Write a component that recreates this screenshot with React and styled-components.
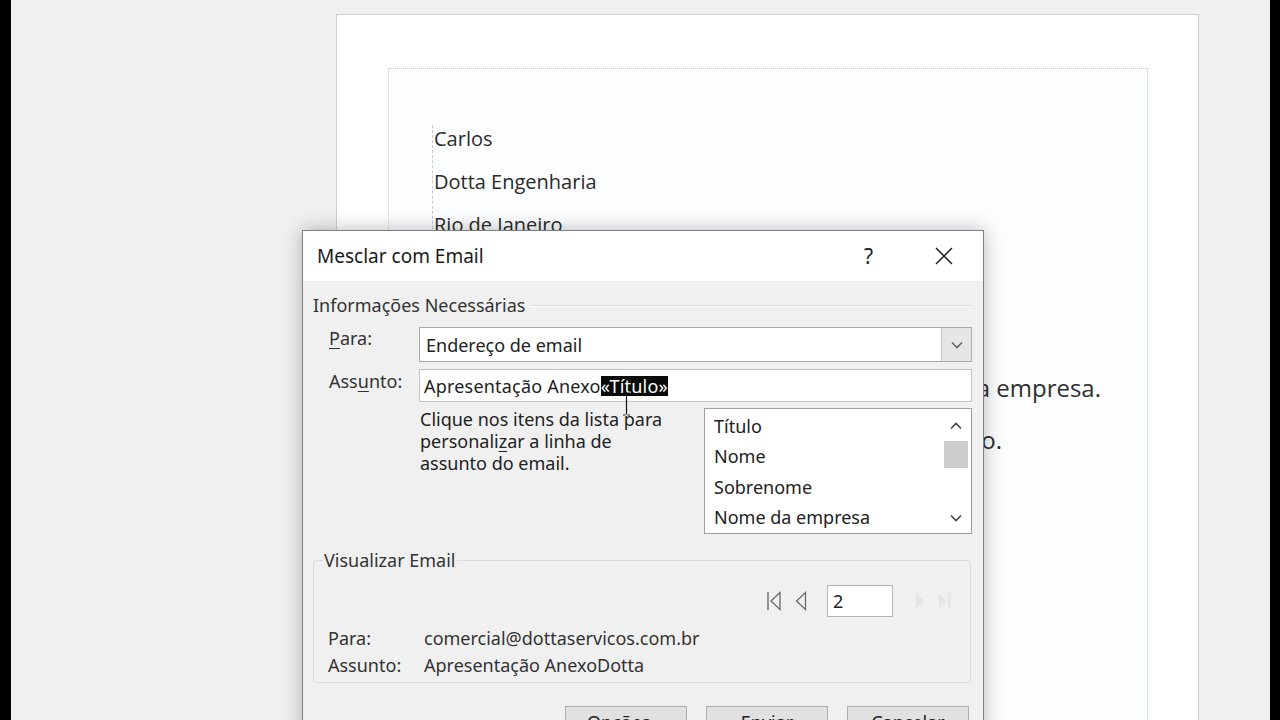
import React from "react";
import styled, { createGlobalStyle } from "styled-components";

const Global = createGlobalStyle`
  html, body { margin: 0; padding: 0; background: #000; }
  body { font-family: "Noto Sans", "Open Sans", sans-serif; }
  * { box-sizing: border-box; }
`;

const Screen = styled.div`
  width: 1280px;
  height: 720px;
  display: flex;
  overflow: hidden;
  background: #000;
`;

const Edge = styled.div`
  width: ${(p) => p.$w}px;
  flex: none;
  background: #000;
`;

const Workspace = styled.div`
  position: relative;
  flex: 1;
  background: #f0f0f0;
  padding: 14px 0 0 325px;
  overflow: hidden;
`;

const Page = styled.div`
  width: 863px;
  height: 900px;
  background: #fff;
  border: 1px solid #cfcfcf;
  padding: 53px 0 0 51px;
`;

const TextArea = styled.div`
  width: 760px;
  height: 800px;
  border-top: 1px dotted #b9c6d3;
  border-left: 1px dotted #c9d4df;
  border-right: 1px dotted #b9d0e6;
  background: #fcfdfe;
  padding: 56px 0 0 43px;
`;

const AddressBlock = styled.div`
  border-left: 1px dashed #c8c8c8;
  padding-left: 1px;
  width: 300px;
`;

const DocLine = styled.p`
  margin: 0 0 15px 0;
  font-family: "Open Sans", "Noto Sans", sans-serif;
  font-size: 20px;
  line-height: 28px;
  color: #2b2b2b;
`;

const DocParagraph = styled.p`
  margin: 0;
  height: ${(p) => p.$h}px;
  padding-right: ${(p) => p.$endGap}px;
  text-align: right;
  font-family: "Open Sans", "Noto Sans", sans-serif;
  font-size: 24px;
  line-height: 32px;
  color: #2f2f2f;
`;

const Spacer = styled.div`
  height: ${(p) => p.$h}px;
`;

/* ---------- dialog ---------- */

const Dialog = styled.div`
  position: absolute;
  left: 291px;
  top: 230px;
  width: 682px;
  height: 520px;
  background: #f0f0f0;
  border: 1px solid #7f7f7f;
  box-shadow: 0 0 18px rgba(0, 0, 0, 0.28);
  display: flex;
  flex-direction: column;
  color: #1e1e1e;
  font-size: 18px;
`;

const TitleBar = styled.div`
  height: 50px;
  background: #fff;
  display: flex;
  align-items: center;
  padding: 0 30px 0 14px;
`;

const Title = styled.div`
  flex: 1;
  font-size: 19px;
  color: #1a1a1a;
`;

const HelpGlyph = styled.span`
  font-size: 21px;
  color: #222;
  margin-right: 62px;
`;

const Body = styled.div`
  padding: 13px 11px 0 10px;
  display: flex;
  flex-direction: column;
`;

const SectionHead = styled.div`
  display: flex;
  align-items: center;
  gap: 6px;
  color: #333;
  line-height: 22px;
`;

const Rule = styled.div`
  flex: 1;
  height: 2px;
  border-top: 1px solid #dcdcdc;
  border-bottom: 1px solid #fbfbfb;
  margin-top: 2px;
`;

const FieldRow = styled.div`
  display: grid;
  grid-template-columns: 106px 1fr;
  margin-top: ${(p) => p.$mt}px;
`;

const FieldLabel = styled.label`
  padding: ${(p) => p.$pt}px 0 0 16px;
  color: #333;
  line-height: 20px;
`;

const Key = styled.span`
  text-decoration: underline;
  text-underline-offset: 3px;
`;

const Combo = styled.div`
  height: 35px;
  display: flex;
  background: #fff;
  border: 1px solid #a9a9a9;
`;

const ComboText = styled.div`
  flex: 1;
  padding: 0 6px;
  display: flex;
  align-items: center;
  color: #222;
`;

const ComboButton = styled.div`
  width: 30px;
  background: #e6e6e6;
  border-left: 1px solid #c2c2c2;
  display: flex;
  align-items: center;
  justify-content: center;
`;

const TextBox = styled.div`
  position: relative;
  height: 33px;
  background: #fff;
  border: 1px solid #c4c4c4;
  display: flex;
  align-items: center;
  padding: 0 4px;
  color: #222;
  white-space: pre;
  letter-spacing: 0.2px;
`;

const Selected = styled.span`
  background: #0a0a0a;
  color: #fff;
  line-height: 20px;
`;

const IBeam = styled.svg`
  position: absolute;
  left: 202px;
  top: 22px;
`;

const HelpRow = styled.div`
  display: grid;
  grid-template-columns: 285px 1fr;
`;

const HelpText = styled.p`
  margin: 0;
  padding: 0 0 0 1px;
  line-height: 22px;
  color: #222;
`;

const ListBox = styled.div`
  height: 126px;
  background: #fff;
  border: 1px solid #9f9f9f;
  display: flex;
`;

const ListItems = styled.ul`
  flex: 1;
  margin: 0;
  padding: 2px 0 0 9px;
  list-style: none;
`;

const ListItem = styled.li`
  height: 30.3px;
  line-height: 30px;
  color: #222;
`;

const ScrollTrack = styled.div`
  width: 30px;
  display: flex;
  flex-direction: column;
  align-items: center;
  padding: 6px 0 4px;
`;

const ScrollArrow = styled.div`
  height: 22px;
  display: flex;
  align-items: center;
  justify-content: center;
`;

const ScrollThumb = styled.div`
  width: 24px;
  height: 27px;
  margin-top: 4px;
  background: #cdcdcd;
`;

const ScrollFill = styled.div`
  flex: 1;
`;

const GroupBox = styled.fieldset`
  margin: 15px 1px 0 0;
  padding: 6px 18px 8px 14px;
  border: 1px solid #dcdcdc;
  border-radius: 3px;
  height: 134px;
  min-width: 0;
`;

const Legend = styled.legend`
  padding: 0 2px;
  margin-left: -6px;
  color: #333;
  line-height: 22px;
`;

const NavRow = styled.div`
  display: flex;
  justify-content: flex-end;
  align-items: center;
  margin-top: 8px;
`;

const NavButton = styled.div`
  width: ${(p) => p.$w}px;
  margin-left: ${(p) => p.$ml || 0}px;
  height: 32px;
  display: flex;
  align-items: center;
  justify-content: center;
`;

const RecordBox = styled.div`
  width: 66px;
  height: 32px;
  margin: 0 21px 0 20px;
  background: #fff;
  border: 1px solid #b4b4b4;
  display: flex;
  align-items: center;
  padding-left: 5px;
  color: #222;
`;

const PreviewGrid = styled.div`
  display: grid;
  grid-template-columns: 96px 1fr;
  row-gap: 5px;
  margin-top: 10px;
  line-height: 22px;
  color: #333;
`;

const ButtonRow = styled.div`
  display: flex;
  justify-content: flex-end;
  gap: 19px;
  margin-top: 23px;
  padding-right: 3px;
`;

const DialogButton = styled.button`
  width: 122px;
  height: 32px;
  background: #e1e1e1;
  border: 1px solid #adadad;
  font: inherit;
  color: #222;
  padding: 0;
`;

const Chevron = ({ dir = "down", color = "#555" }) => (
  <svg width="12" height="8" viewBox="0 0 12 8">
    <path
      d={dir === "down" ? "M1 1.5 L6 6.5 L11 1.5" : "M1 6.5 L6 1.5 L11 6.5"}
      fill="none"
      stroke={color}
      strokeWidth="1.6"
    />
  </svg>
);

const FirstIcon = ({ color }) => (
  <svg width="16" height="22" viewBox="0 0 16 22">
    <path d="M2 2 V20" stroke={color} strokeWidth="1.4" />
    <path d="M14 2.5 L5 11 L14 19.5 Z" fill="none" stroke={color} strokeWidth="1.3" />
  </svg>
);

const PrevIcon = ({ color }) => (
  <svg width="13" height="22" viewBox="0 0 13 22">
    <path d="M11.5 2.5 L2.5 11 L11.5 19.5 Z" fill="none" stroke={color} strokeWidth="1.3" />
  </svg>
);

const NextIcon = ({ color }) => (
  <svg width="12" height="22" viewBox="0 0 12 22">
    <path d="M2 4 L10 11 L2 18 Z" fill={color} />
  </svg>
);

const LastIcon = ({ color }) => (
  <svg width="14" height="22" viewBox="0 0 14 22">
    <path d="M1 4 L8 11 L1 18 Z" fill={color} />
    <path d="M11.5 3 V19" stroke={color} strokeWidth="2.2" />
  </svg>
);

const fields = ["Título", "Nome", "Sobrenome", "Nome da empresa"];

export default function App() {
  return (
    <>
      <Global />
      <Screen>
        <Edge $w={11} />
        <Workspace>
          <Page>
            <TextArea>
              <AddressBlock>
                <DocLine>Carlos</DocLine>
                <DocLine>Dotta Engenharia</DocLine>
                <DocLine>Rio de Janeiro</DocLine>
              </AddressBlock>
              <Spacer $h={118} />
              <DocParagraph $h={52} $endGap={46}>
                Gostaria de apresentar os serviços da nossa empresa.
              </DocParagraph>
              <DocParagraph $h={52} $endGap={145}>
                Segue em anexo a nossa apresentação.
              </DocParagraph>
            </TextArea>
          </Page>

          <Dialog>
            <TitleBar>
              <Title>Mesclar com Email</Title>
              <HelpGlyph>?</HelpGlyph>
              <svg width="18" height="18" viewBox="0 0 18 18">
                <path d="M1 1 L17 17 M17 1 L1 17" stroke="#222" strokeWidth="1.5" />
              </svg>
            </TitleBar>

            <Body>
              <SectionHead>
                Informações Necessárias
                <Rule />
              </SectionHead>

              <FieldRow $mt={11}>
                <FieldLabel $pt={1}>
                  <Key>P</Key>ara:
                </FieldLabel>
                <Combo>
                  <ComboText>Endereço de email</ComboText>
                  <ComboButton>
                    <Chevron color="#666" />
                  </ComboButton>
                </Combo>
              </FieldRow>

              <FieldRow $mt={7}>
                <FieldLabel $pt={2}>
                  Ass<Key>u</Key>nto:
                </FieldLabel>
                <TextBox>
                  Apresentação Anexo<Selected>«Título»</Selected>
                  <IBeam width="9" height="24" viewBox="0 0 9 24">
                    <path d="M1 1 H3.5 M5.5 1 H8 M4.5 1.5 V22.5 M1 23 H3.5 M5.5 23 H8" stroke="#111" strokeWidth="1.2" fill="none" />
                  </IBeam>
                </TextBox>
              </FieldRow>

              <FieldRow $mt={6}>
                <span />
                <HelpRow>
                  <HelpText>
                    Clique nos itens da lista para
                    <br />
                    personali<Key>z</Key>ar a linha de
                    <br />
                    assunto do email.
                  </HelpText>
                  <ListBox>
                    <ListItems>
                      {fields.map((f) => (
                        <ListItem key={f}>{f}</ListItem>
                      ))}
                    </ListItems>
                    <ScrollTrack>
                      <ScrollArrow>
                        <Chevron dir="up" color="#444" />
                      </ScrollArrow>
                      <ScrollThumb />
                      <ScrollFill />
                      <ScrollArrow>
                        <Chevron color="#444" />
                      </ScrollArrow>
                    </ScrollTrack>
                  </ListBox>
                </HelpRow>
              </FieldRow>

              <GroupBox>
                <Legend>Visualizar Email</Legend>
                <NavRow>
                  <NavButton $w={16}>
                    <FirstIcon color="#6a6a6a" />
                  </NavButton>
                  <NavButton $w={13} $ml={12}>
                    <PrevIcon color="#6a6a6a" />
                  </NavButton>
                  <RecordBox>2</RecordBox>
                  <NavButton $w={12}>
                    <NextIcon color="#e4e4e4" />
                  </NavButton>
                  <NavButton $w={14} $ml={12}>
                    <LastIcon color="#e4e4e4" />
                  </NavButton>
                </NavRow>
                <PreviewGrid>
                  <span>Para:</span>
                  <span>comercial@dottaservicos.com.br</span>
                  <span>Assunto:</span>
                  <span>Apresentação AnexoDotta</span>
                </PreviewGrid>
              </GroupBox>

              <ButtonRow>
                <DialogButton>Opções...</DialogButton>
                <DialogButton>Enviar</DialogButton>
                <DialogButton>Cancelar</DialogButton>
              </ButtonRow>
            </Body>
          </Dialog>
        </Workspace>
        <Edge $w={10} />
      </Screen>
    </>
  );
}
